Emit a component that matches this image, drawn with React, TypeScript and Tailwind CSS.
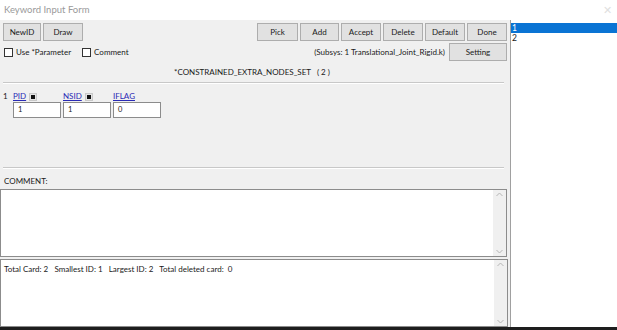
import React from "react";

const btn =
  "h-[18px] border border-[#adadad] bg-[#e1e1e1] text-[8px] text-[#1a1a1a] flex items-center justify-center";

function ScrollBox({ children }: { children?: React.ReactNode }) {
  return (
    <div className="flex border border-[#8c8c8c] bg-white h-full">
      <div className="flex-1 px-[3px] pt-[3px] text-[8px] text-[#1a1a1a]">{children}</div>
      <div className="w-[13px] bg-[#f0f0f0] flex flex-col items-center justify-between py-[2px] text-[#b5b5b5]">
        <svg width="7" height="5" viewBox="0 0 7 5">
          <path d="M0.5 4 L3.5 1 L6.5 4" fill="none" stroke="currentColor" strokeWidth="1" />
        </svg>
        <svg width="7" height="5" viewBox="0 0 7 5">
          <path d="M0.5 1 L3.5 4 L6.5 1" fill="none" stroke="currentColor" strokeWidth="1" />
        </svg>
      </div>
    </div>
  );
}

function Field({ label, dot }: { label: string; dot?: boolean }) {
  return (
    <div className="flex items-center w-[48px] mr-[2px] h-[9px] gap-[3px]">
      <span className="text-[8px] leading-[9px] text-[#2a2ab5] underline">{label}</span>
      {dot && (
        <span className="w-[8px] h-[8px] bg-[#e4e4e4] border border-[#c8c8c8] flex items-center justify-center">
          <span className="w-[4px] h-[4px] bg-[#111]" />
        </span>
      )}
    </div>
  );
}

export default function App() {
  const cards = ["1", "2"];
  return (
    <div
      className="w-[617px] h-[330px] flex flex-col bg-[#f0f0f0] overflow-hidden"
      style={{ fontFamily: 'Lato, "Open Sans", sans-serif' }}
    >
      <div className="h-[20px] bg-white flex items-center justify-between px-[4px] shrink-0">
        <span className="text-[9.5px] text-[#9a9a9a]">Keyword Input Form</span>
        <span className="text-[11px] text-[#e0e0e0] mr-[1px]">✕</span>
      </div>

      <div className="flex flex-1 min-h-0">
        <div className="w-[511px] flex flex-col border-r border-[#a0a0a0] shrink-0">
          <div className="flex items-center justify-between pl-[3px] pr-[3px] mt-[3px]">
            <div className="flex gap-[2px]">
              <div className={`${btn} w-[38px]`}>NewID</div>
              <div className={`${btn} w-[40px]`}>Draw</div>
            </div>
            <div className="flex gap-[2px]">
              <div className={`${btn} w-[41px]`}>Pick</div>
              <div className={`${btn} w-[39px]`}>Add</div>
              <div className={`${btn} w-[40px]`}>Accept</div>
              <div className={`${btn} w-[40px]`}>Delete</div>
              <div className={`${btn} w-[40px]`}>Default</div>
              <div className={`${btn} w-[40px]`}>Done</div>
            </div>
          </div>

          <div className="flex items-center justify-between pl-[4px] pr-[3px] mt-[2px] h-[18px]">
            <div className="flex items-center text-[8px] text-[#1a1a1a]">
              <span className="w-[9px] h-[9px] border border-[#333] bg-white mr-[3px]" />
              <span className="mr-[11px]">Use *Parameter</span>
              <span className="w-[9px] h-[9px] border border-[#333] bg-white mr-[3px]" />
              <span>Comment</span>
            </div>
            <div className="flex items-center">
              <span className="text-[8px] text-[#1a1a1a] mr-[4px]">(Subsys: 1 Translational_Joint_Rigid.k)</span>
              <div className={`${btn} w-[58px]`}>Setting</div>
            </div>
          </div>

          <div className="text-center text-[8px] text-[#1a1a1a] mt-[2px] h-[18px] leading-[18px] pr-[6px]">
            *CONSTRAINED_EXTRA_NODES_SET &nbsp;&nbsp;( 2 )
          </div>

          <div className="mx-[3px] mr-[6px] mt-[1px] h-[2px] border-t border-[#c8c8c8] border-b border-b-white" />

          <div className="flex pl-[3px] mt-[8px]">
            <span className="text-[8px] text-[#1a1a1a] w-[10px] leading-[9px]">1</span>
            <div className="flex flex-col">
              <div className="flex">
                <Field label="PID" dot />
                <Field label="NSID" dot />
                <Field label="IFLAG" />
              </div>
              <div className="flex gap-[2px] mt-[1px]">
                {["1", "1", "0"].map((v, i) => (
                  <div
                    key={i}
                    className="w-[48px] h-[16px] bg-white border border-[#8c8c8c] text-[7.5px] text-[#1a1a1a] pl-[4px] leading-[14px]"
                  >
                    {v}
                  </div>
                ))}
              </div>
            </div>
          </div>

          <div className="flex-1" />

          <div className="mx-[3px] mr-[6px] h-[2px] border-t border-[#c8c8c8] border-b border-b-white" />

          <div className="text-[8px] text-[#1a1a1a] pl-[4px] mt-[6px] h-[14px]">COMMENT:</div>

          <div className="h-[68px] mr-[3px]">
            <ScrollBox />
          </div>
          <div className="h-[68px] mr-[2px] mt-[2px]">
            <ScrollBox>
              Total Card: 2 &nbsp;&nbsp;Smallest ID: 1 &nbsp;&nbsp;Largest ID: 2 &nbsp;&nbsp;Total deleted card: &nbsp;0
            </ScrollBox>
          </div>
        </div>

        <div className="flex-1 bg-white pt-[3px] flex flex-col">
          {cards.map((c, i) => (
            <div
              key={c}
              className={`h-[10px] text-[8.5px] leading-[10px] pl-[1px] ${
                i === 0 ? "bg-[#0a74d4] text-white" : "text-[#1a1a1a]"
              }`}
            >
              {c}
            </div>
          ))}
        </div>
      </div>
      <div className="h-[3px] bg-[#1e1e1e] shrink-0" />
    </div>
  );
}
